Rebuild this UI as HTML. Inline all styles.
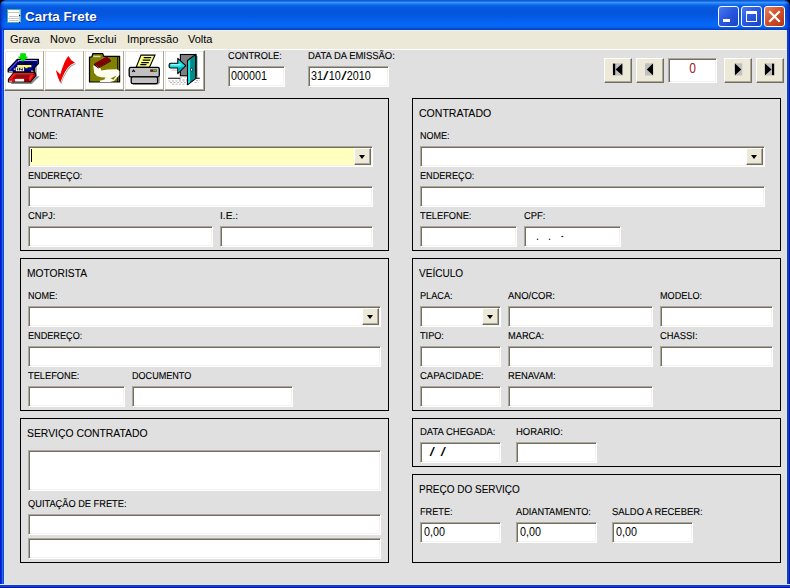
<!DOCTYPE html><html lang="pt"><head><meta charset="utf-8"><title>Carta Frete</title><style>
*{margin:0;padding:0;box-sizing:border-box}
html,body{width:790px;height:588px;overflow:hidden;background:#0831d9}
body{position:relative;font-family:"Liberation Sans",sans-serif;color:#000}
.abs,.tb,.pn,.lb,.hd,.bt,.nb,.cb,.mi,.tv{position:absolute}
#title{left:0;top:0;width:790px;height:30px;border-radius:6px 6px 0 0;background:linear-gradient(to right,rgba(0,20,160,0.75) 0,rgba(0,40,190,0.35) 2px,rgba(0,60,220,0) 5px,rgba(0,60,220,0) 784px,rgba(0,40,190,0.35) 787px,rgba(0,20,150,0.8) 790px),linear-gradient(to bottom,#0a4fc8 0px,#1c70ea 1.5px,#3a95ff 2.5px,#2484f6 3.5px,#0e68ea 5px,#0559de 7px,#0456dc 12px,#0458e0 16px,#0560ee 20px,#0568f8 25px,#0564f2 27px,#0550d8 28.5px,#0a38b0 30px)}
#corners{left:0;top:0;width:790px;height:8px;background:#000;}
#ttext{left:25px;top:9px;font-weight:bold;font-size:13.4px;line-height:16px;color:#fff;text-shadow:1px 1px 0 #0a2a8c;white-space:nowrap;letter-spacing:0.1px}
#bl{left:0;top:30px;width:5px;height:558px;background:linear-gradient(to right,#0019cf 0,#0019cf 1px,#0831d9 1px,#0831d9 2px,#2468f5 2px,#2468f5 3px,#1049c0 3px,#1049c0 4px,#dbe8fc 4px,#dbe8fc 5px)}
#br{left:786px;top:30px;width:4px;height:558px;background:linear-gradient(to right,#d6e8ff 0,#d6e8ff 1px,#1a3eb0 1px,#1a3eb0 2px,#1240c4 2px,#1240c4 3px,#0018b0 3px,#0018b0 4px)}
#bb{left:0;top:584px;width:790px;height:4px;background:linear-gradient(to bottom,#d6e8ff 0,#d6e8ff 1px,#1a3eb0 1px,#1a3eb0 2px,#1240c4 2px,#1240c4 3px,#0018b0 3px,#0018b0 4px)}
#menu{left:5px;top:30px;width:781px;height:19px;background:#ece9d8;border-top:1px solid #eef2fb}
#menuline{left:5px;top:49px;width:781px;height:1px;background:#fff}
.mi{top:33px;font-size:11px;line-height:13px;white-space:nowrap}
#client{left:5px;top:50px;width:781px;height:534px;background:#e0e0e0}
.pn{border:1px solid #000;background:#e0e0e0}
.hd{font-size:11px;line-height:13px;white-space:nowrap;transform-origin:0 0;-webkit-text-stroke:0.08px #000}
.lb{text-rendering:geometricPrecision;font-size:10px;line-height:11px;white-space:nowrap;transform-origin:0 0;-webkit-text-stroke:0.12px #000}
.tb{height:21px;background:#fff;border:1px solid;border-color:#aca899 #fff #fff #aca899;box-shadow:inset 1px 1px 0 #716f64,inset -1px -1px 0 #f4f3ee}
.tv{font-size:13px;line-height:15px;white-space:nowrap;transform:scaleX(0.83);transform-origin:0 0}
.tv i{font-style:normal;display:inline-block;transform:scaleX(1.8);margin:0 1.7px}
.cb{width:17px;height:17px;background:#ece9d8;border:1px solid;border-color:#fff #716f64 #716f64 #fff;box-shadow:inset -1px -1px 0 #aca899}
.cb:after{content:"";position:absolute;left:4px;top:6px;border:solid transparent;border-width:4px 3.5px 0 3.5px;border-top-color:#000}
.bt{top:50px;width:41px;height:41px;background:#fff;border:1px solid;border-color:#fff #716f64 #716f64 #fff;box-shadow:inset -1px -1px 0 #aca899,inset 1px 1px 0 #e9e7dc}
.bt svg{position:absolute;left:-1px;top:-1px}
.nb{top:58px;width:28px;height:25px;background:#ece9d8;border:1px solid;border-color:#fff #716f64 #716f64 #fff;box-shadow:inset -1px -1px 0 #aca899}
.nb svg{position:absolute;left:-1px;top:-1px}
.wb{position:absolute;top:6px;width:21px;height:21px;border:1px solid #fff;border-radius:3px}
</style></head><body>
<div id="corners" class="abs"></div>
<div id="title" class="abs"></div>
<svg class="abs" style="left:7px;top:9px" width="15" height="15" viewBox="0 0 15 15"><rect x="0.500" y="0.500" width="13" height="13" fill="#fff" stroke="#4aa8a8"/><rect x="12" y="1" width="1.500" height="12" fill="#a8dcd8"/><rect x="1" y="3" width="11" height="1" fill="#c4c4c4"/><rect x="2" y="7" width="9.500" height="1" fill="#c4c4c4"/><rect x="1" y="9" width="11" height="1" fill="#c4c4c4"/><rect x="2" y="11" width="9.500" height="1" fill="#c4c4c4"/><circle cx="12.600" cy="6.500" r="0.650" fill="#000"/><circle cx="12.600" cy="13.500" r="0.650" fill="#000"/></svg>
<div id="ttext" class="abs">Carta Frete</div>
<div class="wb" style="left:718px;background:linear-gradient(135deg,#4a7bf0 0%,#2a58e0 45%,#1a43c4 100%)"><span class="abs" style="left:4px;top:12px;width:7px;height:3px;background:#fff"></span></div>
<div class="wb" style="left:741px;background:linear-gradient(135deg,#4a7bf0 0%,#2a58e0 45%,#1a43c4 100%)"><span class="abs" style="left:4px;top:4px;width:11px;height:11px;border:1px solid #fff;border-top-width:3px"></span></div>
<div class="wb" style="left:764px;background:linear-gradient(135deg,#e8825e 0%,#d4502c 45%,#b83312 100%)"><svg class="abs" style="left:0;top:0" width="19" height="19" viewBox="0 0 19 19"><path d="M5 5L14 14M14 5L5 14" stroke="#fff" stroke-width="2.2" stroke-linecap="square"/></svg></div>
<div id="bl" class="abs"></div><div id="br" class="abs"></div>
<div id="menu" class="abs"></div><div id="menuline" class="abs"></div>
<div class="mi" style="left:10px">Grava</div>
<div class="mi" style="left:50px">Novo</div>
<div class="mi" style="left:87px">Exclui</div>
<div class="mi" style="left:127px">Impressão</div>
<div class="mi" style="left:188px">Volta</div>
<div id="client" class="abs"></div>
<div id="bb" class="abs"></div>
<div class="bt" style="left:4px"><svg style="left:-1px;top:-1px" width="40" height="40" viewBox="0 0 40 40"><polygon points="6.600,33.900 27.700,33.900 35.700,26.200 32.400,26.200 26.500,32.300 8,32.300" fill="#8a8a8a"/>
<rect x="29.800" y="15.500" width="1.600" height="11" fill="#101010"/><rect x="31.400" y="16" width="1.300" height="9.500" fill="#909090"/>
<polygon points="4.400,31.800 4.400,29.300 10.200,22.200 30.800,22.200 32,25.300 26.500,32 4.400,32" fill="#c40000" stroke="#000" stroke-width="1.100" stroke-linejoin="round"/>
<polygon points="12.400,23.100 28,23.100 26,27.900 10.500,27.900" fill="#980c0c"/>
<polygon points="11.500,23 29.500,23 29,24.400 11,24.400" fill="#c43030"/>
<polygon points="10,23.100 12,23.600 7,29.800 4.900,29.300" fill="#ff2020"/>
<polygon points="26.500,24.700 29.500,25.300 26,30.900 23.800,30.200" fill="#ff2020"/>
<polygon points="5,29.500 10.900,29 10.900,31.400 5,31.400" fill="#e01010"/>
<rect x="20.100" y="28.900" width="5" height="2.500" fill="#8c0000"/>
<rect x="10.900" y="28.900" width="9.200" height="2.600" fill="#fff"/>
<rect x="5" y="30.800" width="3.200" height="0.800" fill="#ffd0d0"/>
<polygon points="4.100,21.600 4.100,19.100 13.300,9.400 34.500,9.400 34.500,13.600 30.200,17.900 28.900,21.900 4.100,21.900" fill="#000090" stroke="#000" stroke-width="1.100" stroke-linejoin="round"/>
<polygon points="14,10 33,10 33,11 15,11 15,14 14,14" fill="#a8a8ff"/>
<polygon points="32.700,10 34,10 34,13.400 32.700,14.500" fill="#2020b0"/>
<polygon points="13.300,10.600 14.200,11.600 6,20.300 5,19.500" fill="#4848e8"/>
<polygon points="14.500,11.600 32.500,11.600 32.500,14.400 13.300,14.400 12.500,13.600" fill="#000058"/>
<polygon points="13.300,14.900 27.400,14.900 27.400,17.300 23.500,17.300 23.500,18.200 21.500,18.200 21,17 13.300,17" fill="#ffff38"/>
<rect x="9.700" y="18.500" width="1.600" height="1.300" fill="#ffff38"/>
<rect x="11.800" y="17.200" width="8.300" height="4" fill="#fff"/>
<path d="M13.600 18.200v2.200M15.400 18.200v2.200M18.300 18.200v2.200M15.400 18.400L18.300 20.200" stroke="#000" stroke-width="0.900" fill="none"/>
<rect x="27.100" y="20.600" width="1.800" height="1" fill="#fff"/>
<rect x="5" y="20.900" width="3.700" height="0.800" fill="#e8e8ff"/>
<polygon points="16.200,3.200 21.900,3.200 21.900,6.400 23.700,6.400 23.700,7.200 19,11.700 14.200,7.200 14.200,6.400 16.200,6.400" fill="#00e000"/></svg></div>
<div class="bt" style="left:44px"><svg style="left:-1px;top:-1px" width="40" height="40" viewBox="0 0 40 40"><path d="M24.500 6.100 L22.400 8.800 L20.400 12.600 L18.700 17 L17.300 21.100 L16.300 24.500 L11.900 20.100 L12.600 23.100 L13.900 27.200 L15.300 30.600 L16.300 33 L17.300 29.900 L19 25.900 L21.100 21.800 L23.500 18 L26.500 15 L31 12.600 L27.200 10.200 Z" fill="#909090" transform="translate(1,1.200)"/>
<path d="M24.500 6.100 L22.400 8.800 L20.400 12.600 L18.700 17 L17.300 21.100 L16.300 24.500 L11.900 20.100 L12.600 23.100 L13.900 27.200 L15.300 30.600 L16.300 33 L17.300 29.900 L19 25.900 L21.100 21.800 L23.500 18 L26.500 15 L31 12.600 L27.200 10.200 Z" fill="#fff" transform="translate(0.500,0.600)"/>
<path d="M24.500 6.100 L22.400 8.800 L20.400 12.600 L18.700 17 L17.300 21.100 L16.300 24.500 L11.900 20.100 L12.600 23.100 L13.900 27.200 L15.300 30.600 L16.300 33 L17.300 29.900 L19 25.900 L21.100 21.800 L23.500 18 L26.500 15 L31 12.600 L27.200 10.200 Z" fill="#f00000"/></svg></div>
<div class="bt" style="left:84px"><svg style="left:-1px;top:-1px" width="40" height="40" viewBox="0 0 40 40"><path d="M5.500 7 L7.800 7 L8.800 3.600 L18.600 3.600 L19.800 6.300 L35.600 6.300 L35.600 32 L5.500 32 Z" fill="#808000" stroke="#000" stroke-width="1.200" stroke-linejoin="round"/>
<path d="M33.700 6.500 V32" stroke="#000" stroke-width="0.900"/>
<rect x="9.200" y="5.700" width="7.200" height="1.500" fill="#d8d8a8"/>
<path d="M9.200 15.600 L12.500 15 L16 17.300 L17.300 20.400 L24 19.500 L33 19.200 L35.400 21 L35.400 25 L30 31 L26 32 L16 32 L15.800 30.800 L20.500 29.500 L21.500 27.600 L17 27.200 L13 26 L10.200 23 Z" fill="#fffff0"/>
<polygon points="26.500,28.500 32.500,25.500 29.500,29.800" fill="#808000"/>
<polygon points="10.200,13.600 22.800,6.400 27,10.200 14.600,17.400" fill="#800000"/>
<polygon points="10.200,13.600 14.600,17.400 14.300,18.600 9.900,15" fill="#300000"/>
<path d="M14.600 17.400 L27 10.200 L27 11.400 L14.300 18.600" fill="#500000"/></svg></div>
<div class="bt" style="left:124px"><svg style="left:-1px;top:-1px" width="40" height="40" viewBox="0 0 40 40"><polygon points="9,34.800 34,34.800 35.800,33 35.800,27 33.700,27 33.700,33.700 9,33.700" fill="#a0a0a0"/>
<polygon points="17,5.100 31,5.100 25.500,17.300 12.200,17.300" fill="#ffff88" stroke="#000" stroke-width="1.100"/>
<path d="M19.700 7.600h7.500M18.700 10.200h7.500M17.300 12.600h7.500M16.300 14.700h6.100" stroke="#000" stroke-width="1.300"/>
<rect x="5.200" y="17.300" width="30.100" height="9.600" rx="1.600" fill="#c0c0c0" stroke="#000" stroke-width="1.300"/>
<rect x="7.200" y="26.900" width="26.400" height="6.800" rx="1.600" fill="#c0c0c0" stroke="#000" stroke-width="1.300"/>
<rect x="26.200" y="19.400" width="6.500" height="2.500" fill="#7a1010"/>
<rect x="29" y="19.800" width="3.300" height="1.500" fill="#20e040"/>
<path d="M8.300 21.800 L9.600 20.200 L10.900 21.800" stroke="#000" stroke-width="1.100" fill="none"/></svg></div>
<div class="bt" style="left:164px"><svg style="left:-1px;top:-1px" width="40" height="40" viewBox="0 0 40 40"><polygon points="32,5.100 33.400,6.400 33.400,27.900 32,27.900" fill="#686868"/>
<rect x="16.400" y="4.500" width="15.500" height="21.300" fill="#808080" stroke="#000" stroke-width="1.100"/>
<path d="M4.100 28.300 H16.400 M32 28.300 H35.800" stroke="#000" stroke-width="1.100"/>
<g stroke="#b4b4b4" stroke-width="1" stroke-dasharray="2 1.500"><path d="M16.500 27 H23 M15 29.800 H23 M4.500 31 H23 M6 32.600 H23 M8 34.200 H23 M32 30.500 H36 M30.500 32.500 H34.500"/></g>
<polygon points="23.500,10.500 31.700,4.400 31.700,28.600 23.500,34.700" fill="#008c8c" stroke="#000" stroke-width="1.100" stroke-linejoin="round"/>
<polygon points="24.100,11 26.100,9.500 26.100,32.300 24.100,33.800" fill="#18e4e4"/>
<ellipse cx="27.600" cy="19.700" rx="1" ry="1.500" fill="#fff" stroke="#000" stroke-width="0.700"/>
<polygon points="7.500,19.700 15.700,19.700 15.700,21.500 13.600,23.800 13.600,20.500 7.500,20.500" fill="#909090" opacity="0.700"/>
<path d="M6.600 13.300 H13.800 V8.400 L21.800 15.700 L13.800 23.600 V18 H6.600 Q5.100 18 5.100 15.700 Q5.100 13.300 6.600 13.300 Z" fill="#18e0e8" stroke="#000" stroke-width="1.100" stroke-linejoin="round"/>
<path d="M7 14.800 H16.500" stroke="#d0ffff" stroke-width="1"/>
<polygon points="14.400,17.600 14.400,22.300 20.400,16.300 16,17.600" fill="#00a4ac"/></svg></div>
<div class="lb" style="left:228px;top:51px;transform:scaleX(0.922)">CONTROLE:</div>
<div class="tb" style="left:228px;top:66px;width:57px"></div><div class="tv" style="left:231px;top:68px">000001</div>
<div class="lb" style="left:308px;top:51px;transform:scaleX(0.945)">DATA DA EMISSÃO:</div>
<div class="tb" style="left:308px;top:66px;width:81px"></div><div class="tv" style="left:311px;top:68px">31<i>/</i>10<i>/</i>2010</div>
<div class="nb" style="left:604px"><svg width="28" height="25" viewBox="0 0 28 25"><rect x="8.500" y="5.300" width="10.200" height="12.200" fill="#c0c0c0"/><rect x="9" y="5.700" width="2.200" height="11.400" fill="#000"/><polygon points="11.600,11.400 18.300,5.600 18.300,17.200" fill="#000"/></svg></div>
<div class="nb" style="left:636px"><svg width="28" height="25" viewBox="0 0 28 25"><rect x="9" y="5.300" width="8.400" height="12.200" fill="#c0c0c0"/><polygon points="10.800,11.400 17,5.600 17,17.200" fill="#000"/></svg></div>
<div class="nb" style="left:724px"><svg width="28" height="25" viewBox="0 0 28 25"><rect x="10.200" y="5.300" width="8" height="12.200" fill="#c0c0c0"/><polygon points="17.200,11.400 11,5.600 11,17.200" fill="#000"/></svg></div>
<div class="nb" style="left:756px"><svg width="28" height="25" viewBox="0 0 28 25"><rect x="8.300" y="5.300" width="10.200" height="12.200" fill="#c0c0c0"/><rect x="16" y="5.700" width="2.100" height="11.400" fill="#000"/><polygon points="15.500,11.400 9,5.600 9,17.200" fill="#000"/></svg></div>
<div class="tb" style="left:668px;top:58px;width:49px;height:25px"></div><div class="tv" style="left:668px;top:60px;width:49px;text-align:center;font-size:14px;line-height:16px;color:#a02028;transform:scaleX(0.86);transform-origin:50% 0">0</div>
<div class="pn" style="left:20px;top:98px;width:369px;height:153px"></div>
<div class="hd" style="left:27px;top:107px;transform:scaleX(0.946)">CONTRATANTE</div>
<div class="lb" style="left:28px;top:131px;transform:scaleX(0.9)">NOME:</div>
<div class="tb" style="left:28px;top:146px;width:345px;height:21px;background:#ffffc0"></div>
<div class="cb" style="left:354px;top:148px"></div>
<div class="abs" style="left:31px;top:149px;width:1px;height:13px;background:#000"></div>
<div class="lb" style="left:28px;top:171px;transform:scaleX(0.913)">ENDEREÇO:</div>
<div class="tb" style="left:28px;top:186px;width:345px;height:21px"></div>
<div class="lb" style="left:28px;top:211px;transform:scaleX(0.948)">CNPJ:</div>
<div class="tb" style="left:28px;top:226px;width:185px;height:21px"></div>
<div class="lb" style="left:220px;top:211px;transform:scaleX(1.017)">I.E.:</div>
<div class="tb" style="left:220px;top:226px;width:153px;height:21px"></div>
<div class="pn" style="left:412px;top:98px;width:369px;height:153px"></div>
<div class="hd" style="left:419px;top:107px;transform:scaleX(0.958)">CONTRATADO</div>
<div class="lb" style="left:420px;top:131px;transform:scaleX(0.9)">NOME:</div>
<div class="tb" style="left:420px;top:146px;width:345px;height:21px"></div>
<div class="cb" style="left:746px;top:148px"></div>
<div class="lb" style="left:420px;top:171px;transform:scaleX(0.913)">ENDEREÇO:</div>
<div class="tb" style="left:420px;top:186px;width:345px;height:21px"></div>
<div class="lb" style="left:420px;top:211px;transform:scaleX(0.925)">TELEFONE:</div>
<div class="tb" style="left:420px;top:226px;width:97px;height:21px"></div>
<div class="lb" style="left:524px;top:211px;transform:scaleX(0.935)">CPF:</div>
<div class="tb" style="left:524px;top:226px;width:97px;height:21px"></div>
<div class="tv" style="left:536px;top:228px">.</div><div class="tv" style="left:548px;top:228px">.</div><div class="tv" style="left:561px;top:228px;transform:scaleX(0.55)">-</div>
<div class="pn" style="left:20px;top:258px;width:369px;height:153px"></div>
<div class="hd" style="left:27px;top:267px;transform:scaleX(0.932)">MOTORISTA</div>
<div class="lb" style="left:28px;top:291px;transform:scaleX(0.9)">NOME:</div>
<div class="tb" style="left:28px;top:306px;width:353px;height:21px"></div>
<div class="cb" style="left:362px;top:308px"></div>
<div class="lb" style="left:28px;top:331px;transform:scaleX(0.913)">ENDEREÇO:</div>
<div class="tb" style="left:28px;top:346px;width:353px;height:21px"></div>
<div class="lb" style="left:28px;top:371px;transform:scaleX(0.925)">TELEFONE:</div>
<div class="tb" style="left:28px;top:386px;width:97px;height:21px"></div>
<div class="lb" style="left:132px;top:371px;transform:scaleX(0.906)">DOCUMENTO</div>
<div class="tb" style="left:132px;top:386px;width:161px;height:21px"></div>
<div class="pn" style="left:412px;top:258px;width:369px;height:153px"></div>
<div class="hd" style="left:419px;top:267px;transform:scaleX(0.915)">VEÍCULO</div>
<div class="lb" style="left:420px;top:291px;transform:scaleX(0.916)">PLACA:</div>
<div class="tb" style="left:420px;top:306px;width:81px;height:21px"></div>
<div class="cb" style="left:482px;top:308px"></div>
<div class="lb" style="left:508px;top:291px;transform:scaleX(0.95)">ANO/COR:</div>
<div class="tb" style="left:508px;top:306px;width:145px;height:21px"></div>
<div class="lb" style="left:660px;top:291px;transform:scaleX(0.913)">MODELO:</div>
<div class="tb" style="left:660px;top:306px;width:113px;height:21px"></div>
<div class="lb" style="left:420px;top:331px;transform:scaleX(0.915)">TIPO:</div>
<div class="tb" style="left:420px;top:346px;width:81px;height:21px"></div>
<div class="lb" style="left:508px;top:331px;transform:scaleX(0.928)">MARCA:</div>
<div class="tb" style="left:508px;top:346px;width:145px;height:21px"></div>
<div class="lb" style="left:660px;top:331px;transform:scaleX(0.937)">CHASSI:</div>
<div class="tb" style="left:660px;top:346px;width:113px;height:21px"></div>
<div class="lb" style="left:420px;top:371px;transform:scaleX(0.951)">CAPACIDADE:</div>
<div class="tb" style="left:420px;top:386px;width:81px;height:21px"></div>
<div class="lb" style="left:508px;top:371px;transform:scaleX(0.938)">RENAVAM:</div>
<div class="tb" style="left:508px;top:386px;width:145px;height:21px"></div>
<div class="pn" style="left:20px;top:418px;width:369px;height:145px"></div>
<div class="hd" style="left:27px;top:427px;transform:scaleX(0.944)">SERVIÇO CONTRATADO</div>
<div class="tb" style="left:28px;top:450px;width:353px;height:41px"></div>
<div class="lb" style="left:28px;top:499px;transform:scaleX(0.925)">QUITAÇÃO DE FRETE:</div>
<div class="tb" style="left:28px;top:514px;width:353px;height:21px"></div>
<div class="tb" style="left:28px;top:538px;width:353px;height:21px"></div>
<div class="pn" style="left:412px;top:418px;width:369px;height:49px"></div>
<div class="lb" style="left:420px;top:427px;transform:scaleX(0.948)">DATA CHEGADA:</div>
<div class="tb" style="left:420px;top:442px;width:81px;height:21px"></div>
<div class="tv" style="left:428.6px;top:444px"><i>/</i></div><div class="tv" style="left:440px;top:444px"><i>/</i></div>
<div class="lb" style="left:516px;top:427px;transform:scaleX(0.946)">HORARIO:</div>
<div class="tb" style="left:516px;top:442px;width:81px;height:21px"></div>
<div class="pn" style="left:412px;top:474px;width:369px;height:89px"></div>
<div class="hd" style="left:419px;top:483px;transform:scaleX(0.908)">PREÇO DO SERVIÇO</div>
<div class="lb" style="left:420px;top:507px;transform:scaleX(0.917)">FRETE:</div>
<div class="tb" style="left:420px;top:522px;width:81px;height:21px"></div>
<div class="tv" style="left:424px;top:524px">0,00</div>
<div class="lb" style="left:516px;top:507px;transform:scaleX(0.921)">ADIANTAMENTO:</div>
<div class="tb" style="left:516px;top:522px;width:81px;height:21px"></div>
<div class="tv" style="left:520px;top:524px">0,00</div>
<div class="lb" style="left:612px;top:507px;transform:scaleX(0.943)">SALDO A RECEBER:</div>
<div class="tb" style="left:612px;top:522px;width:81px;height:21px"></div>
<div class="tv" style="left:616px;top:524px">0,00</div>
</body></html>
